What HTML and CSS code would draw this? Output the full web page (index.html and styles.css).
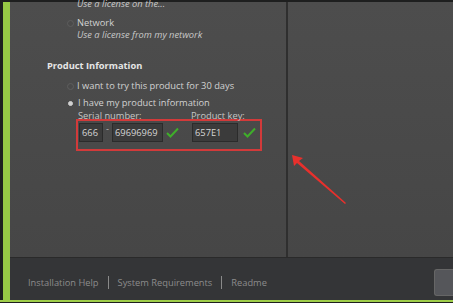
FILE: index.html
```html
<!DOCTYPE html>
<html lang="en">
<head>
  <meta charset="UTF-8" />
  <title>Product Information</title>
  <link rel="stylesheet" href="styles.css">
</head>
<body>
  <div class="window">
    <div class="accent"></div>
    <div class="main">
      <div class="content">
        <div class="panel">
          <div class="option">
            <p class="sub cut">Use a license on the...</p>
          </div>
          <div class="option">
            <div class="radio-row"><span class="radio"></span>Network</div>
            <p class="sub">Use a license from my network</p>
          </div>

          <h3 class="heading">Product Information</h3>
          <div class="radio-row trial"><span class="radio"></span>I want to try this product for 30 days</div>
          <div class="radio-row have"><span class="radio on"></span>I have my product information</div>

          <div class="keys">
            <div class="labels">
              <span class="lbl-serial">Serial number:</span>
              <span>Product key:</span>
            </div>
            <div class="fields">
              <span class="field f-short">666</span>
              <span class="dash">-</span>
              <span class="field f-long">69696969</span>
              <svg class="tick" width="13" height="11" viewBox="0 0 13 11"><path d="M1 6 L4.5 9.5 L12 1.5" fill="none" stroke="#3fae2a" stroke-width="2"/></svg>
              <span class="field f-key">657E1</span>
              <svg class="tick tick-key" width="13" height="11" viewBox="0 0 13 11"><path d="M1 6 L4.5 9.5 L12 1.5" fill="none" stroke="#3fae2a" stroke-width="2"/></svg>
            </div>
          </div>
        </div>
        <div class="divider"></div>
        <div class="side"></div>
      </div>
      <div class="footer">
        <a>Installation Help</a>
        <span class="sep"></span>
        <a>System Requirements</a>
        <span class="sep"></span>
        <a>Readme</a>
        <span class="btn"></span>
      </div>
    </div>
  </div>

  <svg class="arrow" width="60" height="54" viewBox="0 0 60 54">
    <path d="M2 2 L13 5 L9 8 L56 50 L55 51 L7 10 L4 13 Z" fill="#e8302c"/>
  </svg>
</body>
</html>
```

FILE: styles.css
```css
body {
  margin: 0;
  background: #1e1f1f;
  font-family: 'Open Sans', 'Liberation Sans', sans-serif;
  font-size: 9.3px;
  line-height: 12px;
  color: #d2d2d2;
  overflow: hidden;
}
.window {
  display: flex;
  height: 298px;
  margin-top: 2px;
  border-bottom: 2px solid #9fce4a;
}
.accent {
  width: 7px;
  margin-left: 3px;
  background: #97c845;
  flex-shrink: 0;
}
.main {
  flex: 1;
  display: flex;
  flex-direction: column;
}
.content {
  display: flex;
  height: 255px;
  background: linear-gradient(180deg, #4d4d4d, #464646);
}
.panel {
  width: 276px;
  padding-left: 37px;
  box-sizing: border-box;
}
.divider {
  width: 2px;
  background: #2f2f2f;
}
.side {
  flex: 1;
}
.option {
  padding-left: 30px;
}
.sub {
  margin: 0;
  font-style: italic;
  color: #c9c9c9;
}
.cut {
  margin-top: -4px;
  margin-bottom: 7px;
}
.radio-row {
  display: flex;
  align-items: center;
  margin-left: -10px;
}
.radio {
  width: 5px;
  height: 5px;
  border-radius: 50%;
  border: 1px solid #5e5e5e;
  margin-right: 3px;
  background: #4a4a4a;
}
.radio.on {
  border-color: #d0d0d0;
  background: #d0d0d0;
  width: 3px;
  height: 3px;
  margin: 0 5px 0 1px;
}
.heading {
  margin: 19px 0 0;
  font-size: 9.3px;
  font-weight: bold;
  color: #e6e6e6;
}
.trial {
  margin: 8px 0 0 20px;
}
.have {
  margin: 5px 0 0 20px;
}
.keys {
  margin: 10px 0 0 29px;
  border: 2px solid #d23a3a;
  width: 182px;
  height: 28px;
  position: relative;
}
.labels {
  position: absolute;
  top: -11px;
  left: 0;
  display: flex;
  color: #c6c6c6;
}
.lbl-serial {
  width: 113px;
}
.fields {
  display: flex;
  align-items: center;
  padding: 2px 0 0 1px;
}
.field {
  box-sizing: border-box;
  height: 19px;
  line-height: 17px;
  background: #3b3b3b;
  border: 1px solid #2b2b2b;
  padding-left: 2px;
  color: #d6d6d6;
}
.f-short {
  width: 24px;
}
.dash {
  width: 9px;
  text-align: center;
  color: #bdbdbd;
  margin-top: -8px;
}
.f-long {
  width: 51px;
}
.f-key {
  width: 46px;
  margin-left: 13px;
}
.tick {
  margin-left: 3px;
}
.tick-key {
  margin-left: 5px;
}
.footer {
  flex: 1;
  display: flex;
  align-items: center;
  background: #343537;
  border-top: 1px solid #2a2a2a;
  padding: 7px 0 0 18px;
  color: #8c8c8c;
}
.sep {
  width: 1px;
  height: 13px;
  background: #8a8a8a;
  margin: 0 9px;
}
.btn {
  margin-left: auto;
  width: 18px;
  height: 25px;
  border-radius: 3px 0 0 3px;
  background: #55565a;
  border: 1px solid #666;
  border-right: none;
}
.arrow {
  position: absolute;
  left: 290px;
  top: 153px;
}
```
